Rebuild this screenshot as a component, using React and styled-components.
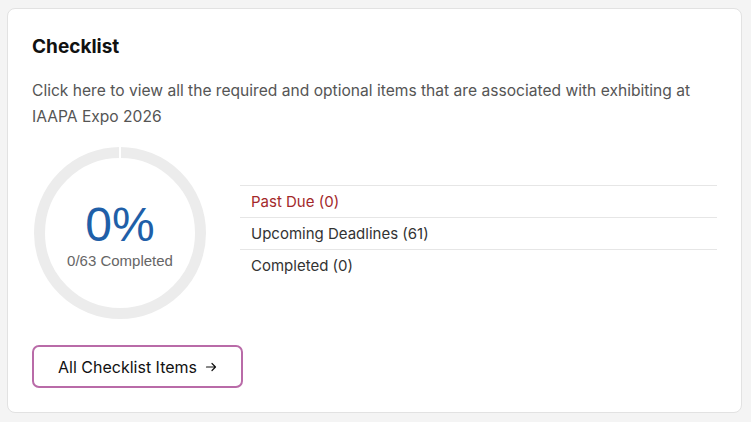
import React from "react";
import styled, { createGlobalStyle } from "styled-components";

const Global = createGlobalStyle`
  html, body { margin: 0; padding: 0; background: #f4f4f4; }
  body { font-family: Inter, "Noto Sans", sans-serif; }
  #root { padding: 8px 9px 9px 7px; }
  * { box-sizing: border-box; }
`;

const Card = styled.section`
  background: #fff;
  border: 1px solid #e2e2e2;
  border-radius: 8px;
  padding: 24px 24px 24px 24px;
  height: 405px;
`;

const Title = styled.h2`
  margin: 0;
  font-size: 19px;
  line-height: 28px;
  font-weight: 700;
  color: #111;
`;

const Description = styled.p`
  margin: 17px 0 0;
  font-size: 15.6px;
  line-height: 26px;
  color: #555;
`;

const Summary = styled.div`
  display: flex;
  align-items: center;
  gap: 32px;
  margin-top: 15px;
`;

const ChartWrap = styled.div`
  position: relative;
  width: 176px;
  height: 176px;
  flex: none;
`;

const ChartCenter = styled.div`
  position: absolute;
  inset: 0;
  display: flex;
  flex-direction: column;
  align-items: center;
  justify-content: center;
  font-family: "Liberation Sans", Arial, sans-serif;
  padding-top: 4px;
`;

const Percent = styled.div`
  font-size: 48px;
  line-height: 52px;
  color: #1f5fa8;
`;

const Count = styled.div`
  font-size: 15px;
  line-height: 20px;
  color: #666;
`;

const StatusList = styled.ul`
  list-style: none;
  margin: 0;
  padding: 0;
  flex: 1;
`;

const StatusRow = styled.li`
  border-top: 1px solid #e6e6e6;
  padding: 5px 11px;
  font-size: 15px;
  line-height: 21px;
  color: ${(p) => (p.$danger ? "#a3282a" : "#333")};
`;

const Button = styled.button`
  margin-top: 24px;
  display: inline-flex;
  align-items: center;
  gap: 8px;
  height: 43px;
  padding: 0 24px 0 24px;
  border: 2px solid #b96ba8;
  border-radius: 7px;
  background: #fff;
  font-family: Inter, sans-serif;
  font-size: 16px;
  color: #111;
  cursor: pointer;
`;

function Ring() {
  return (
    <svg width="176" height="176" viewBox="0 0 176 176">
      <circle cx="88" cy="88" r="80.5" fill="none" stroke="#ececec" strokeWidth="11" />
      <rect x="87" y="1" width="2" height="14" fill="#fff" />
    </svg>
  );
}

function Arrow() {
  return (
    <svg width="12" height="12" viewBox="0 0 12 12" fill="none" stroke="#111" strokeWidth="1.2" strokeLinecap="round" strokeLinejoin="round">
      <path d="M1.5 6h9M7 2.5 10.5 6 7 9.5" />
    </svg>
  );
}

export default function App() {
  return (
    <>
      <Global />
      <Card>
        <Title>Checklist</Title>
        <Description>
          Click here to view all the required and optional items that are associated with exhibiting at IAAPA Expo 2026
        </Description>
        <Summary>
          <ChartWrap>
            <Ring />
            <ChartCenter>
              <Percent>0%</Percent>
              <Count>0/63 Completed</Count>
            </ChartCenter>
          </ChartWrap>
          <StatusList>
            <StatusRow $danger>Past Due (0)</StatusRow>
            <StatusRow>Upcoming Deadlines (61)</StatusRow>
            <StatusRow>Completed (0)</StatusRow>
          </StatusList>
        </Summary>
        <Button>
          All Checklist Items <Arrow />
        </Button>
      </Card>
    </>
  );
}
